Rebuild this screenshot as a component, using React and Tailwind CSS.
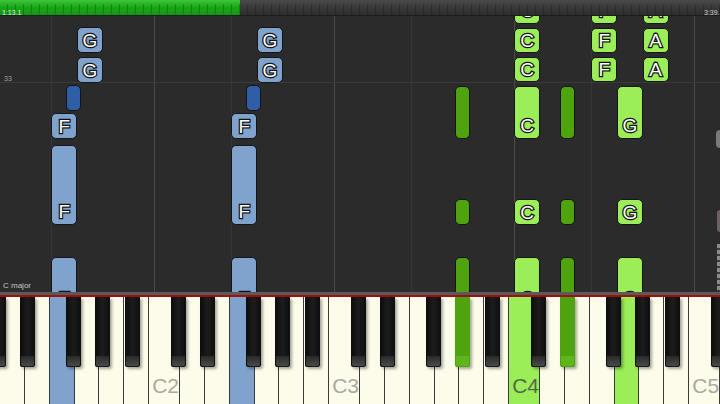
import React from 'react'

const KW = 720 / 28 // white key width
const WHITE_NAMES = ['D', 'E', 'F', 'G', 'A', 'B', 'C']
const BLACK_OFFSET = { C: -1.5, D: 2, F: -3.5, G: 0, A: 3.5 }
const BLACK_W = 15
const TOP = 16 // roll starts below the time bar

const whiteKeys = Array.from({ length: 28 }, (_, i) => {
  const name = WHITE_NAMES[i % 7]
  return { i, name, octave: name === 'C' ? Math.floor((i + 1) / 7) + 1 : null }
})

// black key that sits right of white key i
const blackX = (i) => (i + 1) * KW + BLACK_OFFSET[WHITE_NAMES[i % 7]] - BLACK_W / 2

const blackKeys = [{ id: 'c#1', x: -1.5 - BLACK_W / 2 }]
whiteKeys.forEach((k) => {
  if (k.name !== 'E' && k.name !== 'B') blackKeys.push({ id: 'b' + k.i, x: blackX(k.i) })
})

const BLUE = '#7fa3cd'
const BLUE_DARK = '#2f5ea6'
const GREEN = '#9bee58'
const GREEN_DARK = '#4fa30e'

const whiteNote = (i) => ({ x: i * KW, w: KW })
const blackNote = (i) => ({ x: blackX(i), w: BLACK_W })

// y values are page pixels
const notes = [
  // left hand
  ...[3, 10].flatMap((g) => [
    { ...whiteNote(g), y1: 27, y2: 53, c: BLUE, l: 'G' },
    { ...whiteNote(g), y1: 57, y2: 83, c: BLUE, l: 'G' },
  ]),
  ...[2, 9].flatMap((f) => [
    { ...blackNote(f), y1: 85, y2: 111, c: BLUE_DARK },
    { ...whiteNote(f), y1: 113, y2: 139, c: BLUE, l: 'F' },
    { ...whiteNote(f), y1: 145, y2: 225, c: BLUE, l: 'F' },
    { ...whiteNote(f), y1: 257, y2: 312, c: BLUE, l: 'F' },
  ]),
  // right hand
  ...[
    [20, 'C'],
    [23, 'F'],
    [25, 'A'],
  ].flatMap(([i, l]) => [
    { ...whiteNote(i), y1: -10, y2: 24, c: GREEN, l },
    { ...whiteNote(i), y1: 28, y2: 53, c: GREEN, l },
    { ...whiteNote(i), y1: 57, y2: 82, c: GREEN, l },
  ]),
  ...[17, 21].flatMap((b) => [
    { ...blackNote(b), y1: 86, y2: 139, c: GREEN_DARK },
    { ...blackNote(b), y1: 199, y2: 225, c: GREEN_DARK },
    { ...blackNote(b), y1: 257, y2: 312, c: GREEN_DARK },
  ]),
  ...[
    [20, 'C'],
    [24, 'G'],
  ].flatMap(([i, l]) => [
    { ...whiteNote(i), y1: 86, y2: 139, c: GREEN, l },
    { ...whiteNote(i), y1: 199, y2: 225, c: GREEN, l },
    { ...whiteNote(i), y1: 257, y2: 312, c: GREEN, l },
  ]),
]

const gridLines = [2, 6, 9, 13, 16, 20, 23, 27].map((i) => ({ x: Math.round(i * KW), bright: (i + 1) % 7 === 0 }))

const pressedWhite = { 2: BLUE, 9: BLUE, 20: GREEN, 24: GREEN }
const pressedBlack = { b17: GREEN_DARK, b21: GREEN_DARK }

function Note({ n }) {
  return (
    <div
      className="absolute rounded-[5px] border border-[#151515] flex flex-col justify-end"
      style={{ left: n.x, width: n.w, top: n.y1 - TOP, height: n.y2 - n.y1, background: n.c }}
    >
      {n.l && (
        <div className="h-[25px] flex items-center justify-center font-['Liberation_Sans',sans-serif] text-[19px] leading-none text-white [-webkit-text-stroke:2.5px_#111] [paint-order:stroke_fill]">
          {n.l}
        </div>
      )}
    </div>
  )
}

export default function App() {
  return (
    <div className="w-[720px] h-[404px] bg-[#2b2b2b] flex flex-col overflow-hidden font-['Liberation_Sans',sans-serif]">
      {/* time bar */}
      <div className="h-[16px] flex relative border-b border-[#1c1c1c]">
        <div className="w-[240px] h-full bg-gradient-to-b from-[#3cc43a] via-[#17a517] to-[#129812]" />
        <div className="flex-1 h-full bg-gradient-to-b from-[#4a4a4a] via-[#383838] to-[#2e2e2e]" />
        <div className="absolute inset-x-0 bottom-0 h-[11px] bg-[repeating-linear-gradient(90deg,transparent_0_7px,rgba(0,0,0,0.22)_7px_8px)]" />
        <span className="absolute left-[2px] top-[9px] text-[7px] leading-none text-[#d8f5d8]">1:13.1</span>
        <span className="absolute left-[704px] top-[9px] text-[7px] leading-none text-[#d0d0d0] whitespace-nowrap">3:39.1</span>
      </div>

      {/* roll */}
      <div className="flex-1 relative overflow-hidden">
        {gridLines.map((g) => (
          <div
            key={g.x}
            className={`absolute top-0 bottom-0 w-px ${g.bright ? 'bg-[#4a4a4a]' : 'bg-[#363636]'}`}
            style={{ left: g.x }}
          />
        ))}
        <div className="absolute left-0 right-0 top-[66px] h-px bg-[#3a3a3a]" />
        <span className="absolute left-[4px] top-[59px] text-[7px] leading-none text-[#a0a0a0]">33</span>
        <span className="absolute left-[3px] top-[266px] text-[8px] leading-none text-[#c4c4c4]">C major</span>

        {notes.map((n, i) => (
          <Note key={i} n={n} />
        ))}

        <div className="absolute left-[716px] top-[114px] w-[4px] h-[18px] bg-[#7a7a7a] rounded-l-sm" />
        <div className="absolute left-[717px] top-[194px] w-[3px] h-[22px] bg-[#6d6168] rounded-l-sm" />
        <div className="absolute left-[717px] top-[228px] w-[3px] h-[48px] bg-[repeating-linear-gradient(180deg,#8a8a8a_0_4px,#3a3a3a_4px_6px)]" />
      </div>

      {/* separator */}
      <div className="h-[3px] bg-[#5a5a5a]" />
      <div className="h-[2px] bg-[#a30e0e]" />

      {/* keyboard */}
      <div className="h-[107px] relative flex bg-[#111]">
        {whiteKeys.map((k) => (
          <div
            key={k.i}
            className="flex-1 h-full border-r border-[#3a3a3a] flex items-end"
            style={{ background: pressedWhite[k.i] || '#fdfcea' }}
          >
            {k.name === 'C' && (
              <span className={`ml-[3px] mb-[8px] text-[21px] leading-none ${k.i === 20 ? 'text-[#56664a]' : 'text-[#a9a9a0]'}`}>
                C{k.octave}
              </span>
            )}
          </div>
        ))}
        {blackKeys.map((b) => (
          <div
            key={b.id}
            className="absolute top-0 h-[70px] rounded-b-[2px] shadow-[2px_2px_3px_rgba(0,0,0,0.35)] flex flex-col justify-end"
            style={{ left: b.x, width: BLACK_W, background: pressedBlack[b.id] || 'linear-gradient(90deg,#0c0c0c,#1c1c1c 50%,#0e0e0e)' }}
          >
            <div
              className={`h-[10px] mx-[1px] mb-[1px] rounded-b-[2px] ${pressedBlack[b.id] ? 'bg-[#5eb51c]' : 'bg-gradient-to-b from-[#2a2a2a] to-[#4a4a4a]'}`}
            />
          </div>
        ))}
      </div>
    </div>
  )
}
